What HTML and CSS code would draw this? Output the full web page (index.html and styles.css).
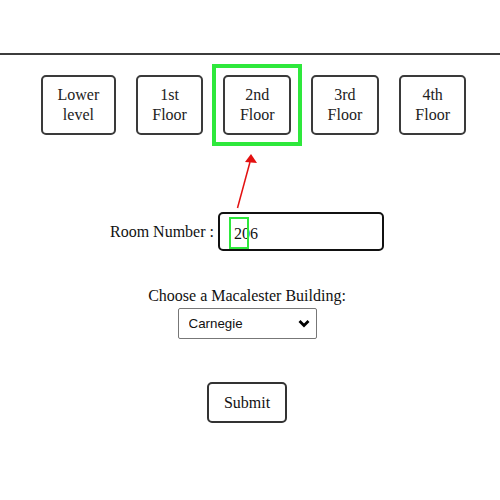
FILE: index.html
```html
<!DOCTYPE html>
<html lang="en">
<head>
    <meta charset="utf-8">
    <meta name="viewport" content="width=device-width, initial-scale=1.0">
    <title>Room Finder</title>
    <link rel="stylesheet" href="styles.css">
</head>

<body>
    <header class="topbar"></header>

    <nav class="floors">
        <button class="floor">Lower<br>level</button>
        <button class="floor">1st<br>Floor</button>
        <button class="floor valgt">2nd<br>Floor</button>
        <button class="floor">3rd<br>Floor</button>
        <button class="floor">4th<br>Floor</button>
    </nav>

    <!-- annotation arrow from input to selected floor -->
    <svg class="pil" width="500" height="500" viewBox="0 0 500 500">
        <line x1="237.5" y1="208" x2="250" y2="162" stroke="#e31010" stroke-width="1.5"/>
        <polygon points="251,154 245,162 257,163" fill="#e31010"/>
    </svg>

    <form class="soeg">
        <div class="room-row">
            <label for="room">Room Number :</label>
            <span class="input-wrap">
                <input id="room" type="text" value="206">
                <span class="markering"></span>
            </span>
        </div>

        <p class="vaelg">Choose a Macalester Building:</p>
        <span class="select-wrap">
            <select>
                <option>Carnegie</option>
                <option>Olin-Rice</option>
                <option>Old Main</option>
            </select>
            <svg class="chevron" width="12" height="9" viewBox="0 0 12 9">
                <polyline points="1.5,2 6,6.5 10.5,2" fill="none" stroke="#000" stroke-width="2.8"/>
            </svg>
        </span>

        <div>
            <button type="button" class="submit">Submit</button>
        </div>
    </form>
</body>
</html>
```

FILE: styles.css
```css
body {
    margin: 0;
    background-color: #fff;
    font-family: "Liberation Serif", "Times New Roman", serif;
    font-size: 16px;
    color: #111;
}

.topbar {
    height: 53px;
    border-bottom: 2px solid #3c3c3c;
}

.floors {
    display: flex;
    gap: 20px;
    margin-top: 20px;
    padding-left: 41px;
}

.floor {
    position: relative;
    height: 60px;
    padding: 0 14.5px;
    border: 2px solid #3a3a3a;
    border-radius: 5px;
    background-color: #fff;
    font-family: inherit;
    font-size: 16px;
    line-height: 20px;
    color: #222;
}

/* green highlight box round the chosen floor */
.valgt::after {
    content: "";
    position: absolute;
    left: -13px;
    right: -13px;
    top: -13px;
    bottom: -13px;
    border: 4px solid #2ee83c;
}

.pil {
    position: absolute;
    left: 0;
    top: 0;
    pointer-events: none;
}

.soeg {
    padding-right: 6px;
    text-align: center;
}

.room-row {
    display: flex;
    justify-content: center;
    align-items: center;
    gap: 4px;
    margin-top: 77px;
}

.input-wrap {
    position: relative;
    display: inline-block;
}

.input-wrap input {
    display: block;
    box-sizing: border-box;
    width: 166px;
    height: 39px;
    padding: 4px 0 0 14px;
    border: 2.5px solid #111;
    border-radius: 5px;
    font-family: inherit;
    font-size: 16px;
    color: #111;
    outline: none;
}

.markering {
    position: absolute;
    left: 11px;
    top: 5px;
    width: 20px;
    height: 32px;
    box-sizing: border-box;
    border: 2.5px solid #2ee83c;
}

.vaelg {
    margin: 36px 0 0 0;
    line-height: 18px;
}

.select-wrap {
    position: relative;
    display: inline-block;
    margin-top: 3px;
}

.select-wrap select {
    display: block;
    width: 139px;
    height: 31px;
    padding: 0 0 0 10px;
    border: 1px solid #777;
    border-radius: 2px;
    background-color: #fff;
    font-family: "Liberation Sans", Arial, sans-serif;
    font-size: 13.33px;
    color: #111;
    appearance: none;
    -webkit-appearance: none;
}

.chevron {
    position: absolute;
    right: 7px;
    top: 11px;
    pointer-events: none;
}

.submit {
    width: 80px;
    height: 41px;
    margin-top: 43px;
    border: 2px solid #333;
    border-radius: 5px;
    background-color: #fff;
    font-family: inherit;
    font-size: 16px;
    color: #111;
}
```
